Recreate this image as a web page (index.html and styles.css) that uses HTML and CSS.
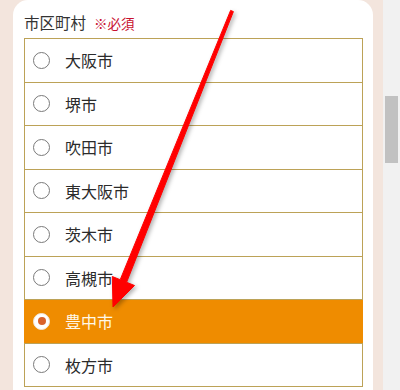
FILE: index.html
```html
<!DOCTYPE html>
<html lang="ja">
<head>
<meta charset="utf-8">
<link rel="stylesheet" href="styles.css">
</head>
<body>
<div class="page">
  <div class="card">
    <div class="label">市区町村<span class="req">※必須</span></div>
    <ul class="options">
      <li class="opt"><span class="radio"></span><span class="name">大阪市</span></li>
      <li class="opt"><span class="radio"></span><span class="name">堺市</span></li>
      <li class="opt"><span class="radio"></span><span class="name">吹田市</span></li>
      <li class="opt"><span class="radio"></span><span class="name">東大阪市</span></li>
      <li class="opt"><span class="radio"></span><span class="name">茨木市</span></li>
      <li class="opt"><span class="radio"></span><span class="name">高槻市</span></li>
      <li class="opt selected"><span class="radio"></span><span class="name">豊中市</span></li>
      <li class="opt"><span class="radio"></span><span class="name">枚方市</span></li>
    </ul>
  </div>
</div>
<div class="scrollbar"><div class="thumb"></div></div>
<svg class="arrow" width="400" height="390" viewBox="0 0 400 390">
  <polygon points="230.6,10.4 233.4,11.6 126.6,282.3 134.5,285.5 113,307 112.3,276.5 120.2,279.7" fill="#ff0000" stroke="#ff0000" stroke-width="1" stroke-linejoin="round"/>
</svg>
</body>
</html>
```

FILE: styles.css
```css
html, body {
  margin: 0;
  padding: 0;
  height: 390px;
  overflow: hidden;
}
body {
  display: flex;
  background: #f3e5dd;
  font-family: "Noto Sans CJK JP", "Noto Sans", sans-serif;
  color: #333;
}
.page {
  flex: 1;
  padding-left: 13px;
  padding-right: 10px;
}
.card {
  background: #fff;
  border-radius: 15px 15px 0 0;
  height: 390px;
  padding: 11px 10px 0 11px;
  box-sizing: border-box;
  overflow: hidden;
}
.label {
  font-size: 15.5px;
  line-height: 22px;
  margin-bottom: 4px;
  color: #333;
}
.req {
  color: #c8102e;
  font-size: 13.5px;
  margin-left: 8px;
}
.options {
  list-style: none;
  margin: 0;
  padding: 0;
  border: 1px solid #bca257;
  border-bottom: none;
}
.opt {
  display: flex;
  align-items: center;
  height: 42.5px;
  border-bottom: 1px solid #bca257;
  padding-left: 8px;
  font-size: 16px;
  color: #2b2b2b;
}
.radio {
  width: 17px;
  height: 17px;
  box-sizing: border-box;
  border: 1px solid #7a7a7a;
  border-radius: 50%;
  background: #fff;
  margin-right: 15px;
  display: flex;
  align-items: center;
  justify-content: center;
}
.opt.selected {
  background: #ef8c00;
  color: #fff8e8;
  margin: 0 -1px;
  padding-left: 9px;
}
.opt.selected .radio {
  border-color: #f4e6d8;
}
.opt.selected .radio::after {
  content: "";
  width: 8px;
  height: 8px;
  border-radius: 50%;
  background: #d9622b;
}
.scrollbar {
  width: 17px;
  background: #f1f1f1;
  flex: none;
}
.thumb {
  margin: 96px 2px 0 2px;
  height: 67px;
  background: #c1c1c1;
}
.arrow {
  position: absolute;
  left: 0;
  top: 0;
  pointer-events: none;
  filter: drop-shadow(2px 2px 2px rgba(0,0,0,0.3));
}
```
